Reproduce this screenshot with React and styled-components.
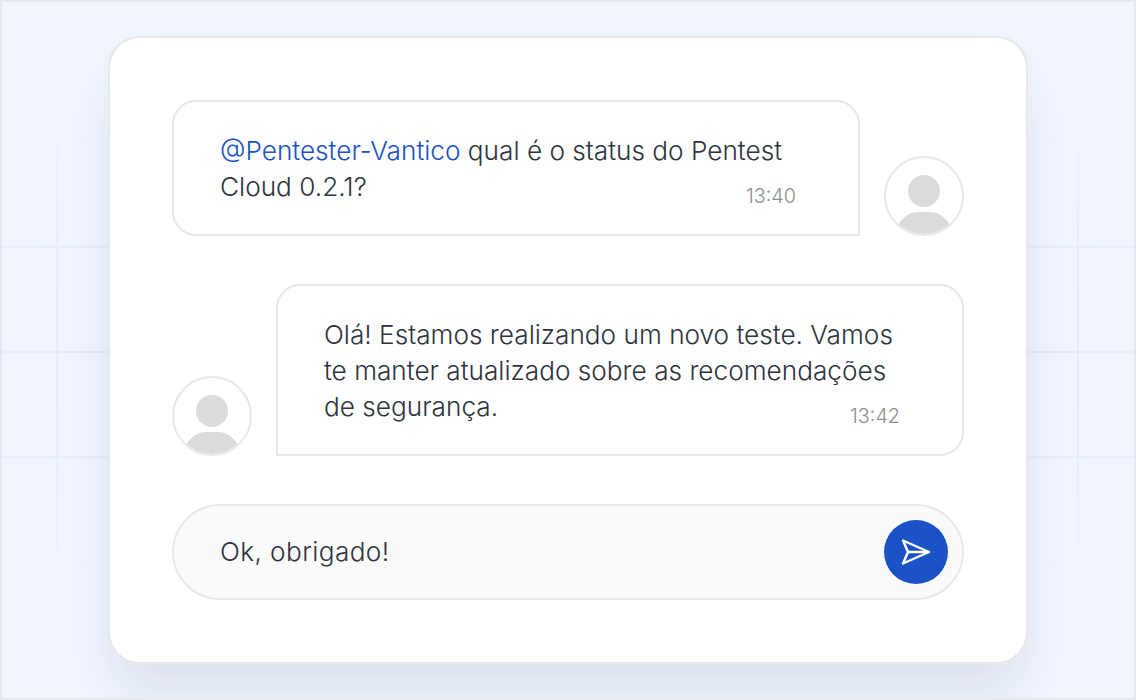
import React from "react";
import styled, { createGlobalStyle } from "styled-components";

const Global = createGlobalStyle`
  html, body { margin: 0; padding: 0; }
  body { font-family: "Inter", "Liberation Sans", sans-serif; }
`;

const Frame = styled.div`
  position: relative;
  width: 1136px;
  height: 700px;
  box-sizing: border-box;
  border: 2px solid #e6e9ef;
  background: #f0f5ff;
  overflow: hidden;
  display: flex;
  justify-content: center;
  padding-top: 34px;
`;

const Grid = styled.div`
  position: absolute;
  inset: 0;
  background-image:
    linear-gradient(to bottom, #e4ebfb 2px, transparent 2px),
    linear-gradient(to right, #e4ebfb 2px, transparent 2px);
  background-size: 1136px 105px, 1021px 700px;
  background-position: 0 34px, 54px 0;
  -webkit-mask-image: radial-gradient(ellipse 900px 320px at 50% 50%, #000 55%, transparent 90%);
  mask-image: radial-gradient(ellipse 900px 320px at 50% 50%, #000 55%, transparent 90%);
`;

const Card = styled.main`
  position: relative;
  flex: none;
  width: 920px;
  height: 628px;
  box-sizing: border-box;
  background: #fff;
  border: 2px solid #e8e8e8;
  border-radius: 32px;
  padding: 62px;
  display: flex;
  flex-direction: column;
  gap: 48px;
  box-shadow: 0 36px 56px -8px rgba(50, 60, 85, 0.11);
`;

const Row = styled.div`
  display: flex;
  align-items: flex-end;
  gap: 24px;
`;

const Bubble = styled.div`
  position: relative;
  flex: 1;
  box-sizing: border-box;
  background: #fff;
  border: 2px solid #e8e8e8;
  border-radius: ${(p) => (p.$side === "left" ? "24px 24px 24px 0" : "24px 24px 0 24px")};
  padding: 31px 62px 29px 46px;
  font-size: 26.2px;
  line-height: 36px;
  font-weight: 300;
  color: #2f3340;
`;

const Mention = styled.span`
  color: #1b52c6;
`;

const Time = styled.span`
  position: absolute;
  right: 62px;
  bottom: 26px;
  font-size: 19.8px;
  line-height: 24px;
  font-weight: 300;
  color: #8f8f8f;
`;

const AvatarCircle = styled.div`
  flex: none;
  width: 80px;
  height: 80px;
  box-sizing: border-box;
  border: 2px solid #e8e8e8;
  border-radius: 50%;
  overflow: hidden;
  background: #fff;
`;

const InputBar = styled.div`
  height: 96px;
  box-sizing: border-box;
  background: #fafafa;
  border: 2px solid #e8e8e8;
  border-radius: 48px;
  padding: 0 14px 0 46px;
  display: flex;
  align-items: center;
  justify-content: space-between;
`;

const InputText = styled.span`
  font-size: 26.2px;
  line-height: 36px;
  font-weight: 300;
  letter-spacing: 0.4px;
  color: #2f3340;
`;

const SendButton = styled.button`
  width: 64px;
  height: 64px;
  border: none;
  padding: 0;
  border-radius: 50%;
  background: #1b52c6;
  display: flex;
  align-items: center;
  justify-content: center;
`;

const Avatar = () => (
  <AvatarCircle>
    <svg width="76" height="76" viewBox="0 0 76 76">
      <circle cx="38" cy="33" r="16" fill="#dbdbdb" />
      <path d="M8 76 C13 61 22 54 32 54 H44 C54 54 63 61 68 76 Z" fill="#dbdbdb" />
    </svg>
  </AvatarCircle>
);

const SendIcon = () => (
  <svg width="32" height="28" viewBox="0 0 32 28" fill="none" stroke="#fff" strokeWidth="2.4" strokeLinecap="round" strokeLinejoin="round">
    <path d="M3 2.5 L29 14 L3 25.5 L8 14 Z" />
    <path d="M8 14 H29" />
  </svg>
);

export default function App() {
  return (
    <>
      <Global />
      <Frame>
        <Grid />
        <Card>
          <Row>
            <Bubble $side="right">
              <Mention>@Pentester-Vantico</Mention> qual é o status do Pentest Cloud 0.2.1?
              <Time>13:40</Time>
            </Bubble>
            <Avatar />
          </Row>
          <Row>
            <Avatar />
            <Bubble $side="left">
              Olá! Estamos realizando um novo teste. Vamos te manter atualizado sobre as recomendações de segurança.
              <Time>13:42</Time>
            </Bubble>
          </Row>
          <InputBar>
            <InputText>Ok, obrigado!</InputText>
            <SendButton aria-label="Enviar"><SendIcon /></SendButton>
          </InputBar>
        </Card>
      </Frame>
    </>
  );
}
